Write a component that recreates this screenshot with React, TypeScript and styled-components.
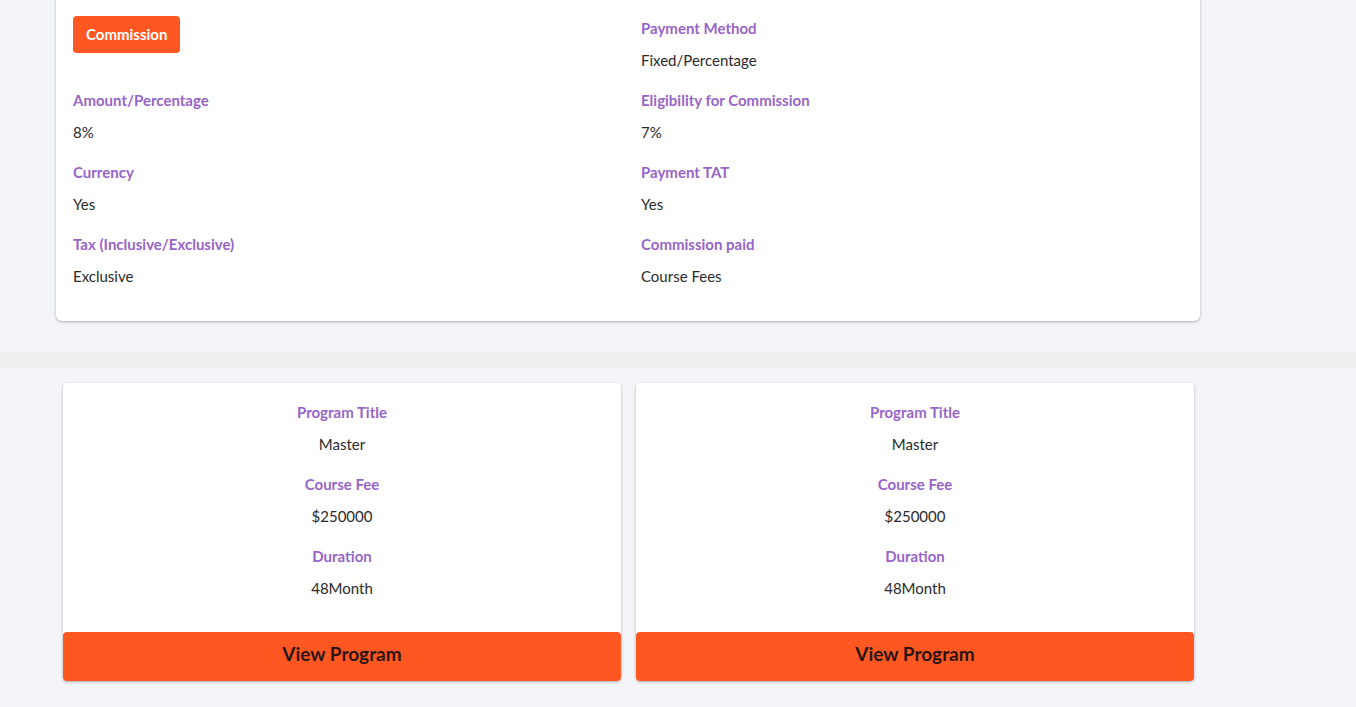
import React from "react";
import styled, { createGlobalStyle } from "styled-components";

const Global = createGlobalStyle`
  html, body { margin: 0; padding: 0; }
  body {
    background: #f4f5f9;
    font-family: "Lato", "Open Sans", sans-serif;
    color: #212529;
  }
`;

const Page = styled.div`
  display: flex;
  flex-direction: column;
  height: 707px;
  overflow: hidden;
`;

const TopSection = styled.section`
  padding: 0 156px 31px 56px;
  margin-top: -12px;
`;

const InfoCard = styled.div`
  width: 1144px;
  background: #fff;
  border-radius: 6px;
  box-shadow: 0 1px 3px rgba(0, 0, 0, 0.3);
  padding: 30px 0 35px 17px;
  box-sizing: border-box;
`;

const InfoGrid = styled.div`
  display: grid;
  grid-template-columns: 568px 1fr;
  row-gap: 20px;
`;

const Field = styled.div`
  display: flex;
  flex-direction: column;
  gap: 12px;
`;

const Label = styled.div`
  font-size: 15px;
  font-weight: 700;
  color: #9665c9;
  line-height: 20px;
`;

const Value = styled.div`
  font-size: 15px;
  color: #2a2a2a;
  line-height: 20px;
`;

const Badge = styled.div`
  align-self: flex-start;
  background: #ff5722;
  color: #fff;
  font-size: 15px;
  font-weight: 700;
  border-radius: 4px;
  padding: 0 13px;
  height: 37px;
  line-height: 37px;
  margin-top: -2px;
`;

const Divider = styled.div`
  height: 16px;
  background: #eeeeee;
`;

const Programs = styled.section`
  display: flex;
  gap: 15px;
  padding: 15px 0 0 63px;
`;

const ProgramCard = styled.div`
  width: 558px;
  background: #fff;
  border-radius: 4px;
  box-shadow: 0 1px 3px rgba(0, 0, 0, 0.3);
  display: flex;
  flex-direction: column;
  overflow: hidden;
`;

const ProgramBody = styled.div`
  display: flex;
  flex-direction: column;
  align-items: center;
  padding: 19px 0 34px;
  gap: 20px;
`;

const ProgramField = styled(Field)`
  align-items: center;
`;

const ViewButton = styled.button`
  border: none;
  background: #ff5722;
  height: 49px;
  padding: 0 0 6px;
  font-family: inherit;
  font-size: 19px;
  font-weight: 700;
  color: #2a1410;
  border-radius: 4px 4px 0 0;
  cursor: pointer;
`;

const info: [string, string][] = [
  ["Payment Method", "Fixed/Percentage"],
  ["Amount/Percentage", "8%"],
  ["Eligibility for Commission", "7%"],
  ["Currency", "Yes"],
  ["Payment TAT", "Yes"],
  ["Tax (Inclusive/Exclusive)", "Exclusive"],
  ["Commission paid", "Course Fees"],
];

const program: [string, string][] = [
  ["Program Title", "Master"],
  ["Course Fee", "$250000"],
  ["Duration", "48Month"],
];

export default function App() {
  return (
    <Page>
      <Global />
      <TopSection>
        <InfoCard>
          <InfoGrid>
            <Field>
              <Badge>Commission</Badge>
            </Field>
            {info.map(([l, v]) => (
              <Field key={l}>
                <Label>{l}</Label>
                <Value>{v}</Value>
              </Field>
            ))}
          </InfoGrid>
        </InfoCard>
      </TopSection>
      <Divider />
      <Programs>
        {[0, 1].map((i) => (
          <ProgramCard key={i}>
            <ProgramBody>
              {program.map(([l, v]) => (
                <ProgramField key={l}>
                  <Label>{l}</Label>
                  <Value>{v}</Value>
                </ProgramField>
              ))}
            </ProgramBody>
            <ViewButton>View Program</ViewButton>
          </ProgramCard>
        ))}
      </Programs>
    </Page>
  );
}
